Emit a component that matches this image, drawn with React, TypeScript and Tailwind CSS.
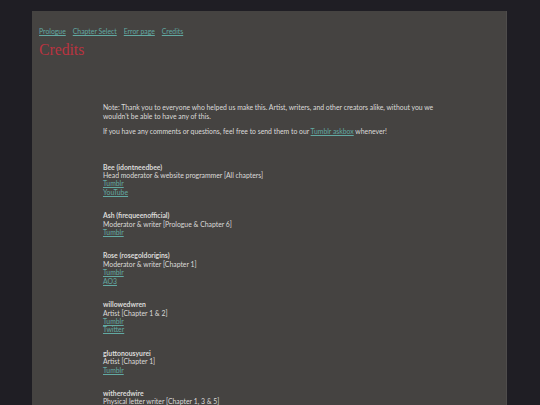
const CREDITS: { name: string; role: string; links: string[] }[] = [
  { name: "Bee (idontneedbee)", role: "Head moderator & website programmer [All chapters]", links: ["Tumblr", "YouTube"] },
  { name: "Ash (firequeenofficial)", role: "Moderator & writer [Prologue & Chapter 6]", links: ["Tumblr"] },
  { name: "Rose (rosegoldorigins)", role: "Moderator & writer [Chapter 1]", links: ["Tumblr", "AO3"] },
  { name: "willowedwren", role: "Artist [Chapter 1 & 2]", links: ["Tumblr", "Twitter"] },
  { name: "gluttonousyurei", role: "Artist [Chapter 1]", links: ["Tumblr"] },
  { name: "witheredwire", role: "Physical letter writer [Chapter 1, 3 & 5]", links: ["Tumblr"] },
];

const NAV = ["Prologue", "Chapter Select", "Error page", "Credits"];

export default function App() {
  return (
    <div className="min-h-[405px] h-[405px] overflow-hidden bg-[#1f1e24] pt-[11px] pl-[32px] font-['Lato','Noto_Sans',sans-serif]">
      <div className="w-[475px] min-h-[500px] bg-[#454341] border-r border-[#4e4c4b] px-[7px] pt-[16px] text-[6.85px] leading-[8.4px] text-[#dcdbd9]">
        {/* nav */}
        <nav className="flex gap-[7px]">
          {NAV.map((n) => (
            <a key={n} href="#" className="text-[#62a9a2] underline">
              {n}
            </a>
          ))}
        </nav>
        <h1 className="mt-[6px] text-[15.7px] leading-[18px] text-[#b93340] font-['Liberation_Serif',serif]">
          Credits
        </h1>

        <div className="ml-[64px] w-[333px] mt-[44px]">
          <p>
            Note: Thank you to everyone who helped us make this. Artist, writers, and other creators alike, without you we
            wouldn't be able to have any of this.
          </p>
          <p className="mt-[7px]">
            If you have any comments or questions, feel free to send them to our{" "}
            <a href="#" className="text-[#62a9a2] underline">
              Tumblr askbox
            </a>{" "}
            whenever!
          </p>

          <div className="mt-[27px] flex flex-col gap-[15px]">
            {CREDITS.map((c) => (
              <div key={c.name}>
                <div className="font-bold">{c.name}</div>
                <div>{c.role}</div>
                {c.links.map((l) => (
                  <div key={l}>
                    <a href="#" className="text-[#62a9a2] underline">
                      {l}
                    </a>
                  </div>
                ))}
              </div>
            ))}
          </div>
        </div>
      </div>
    </div>
  );
}
